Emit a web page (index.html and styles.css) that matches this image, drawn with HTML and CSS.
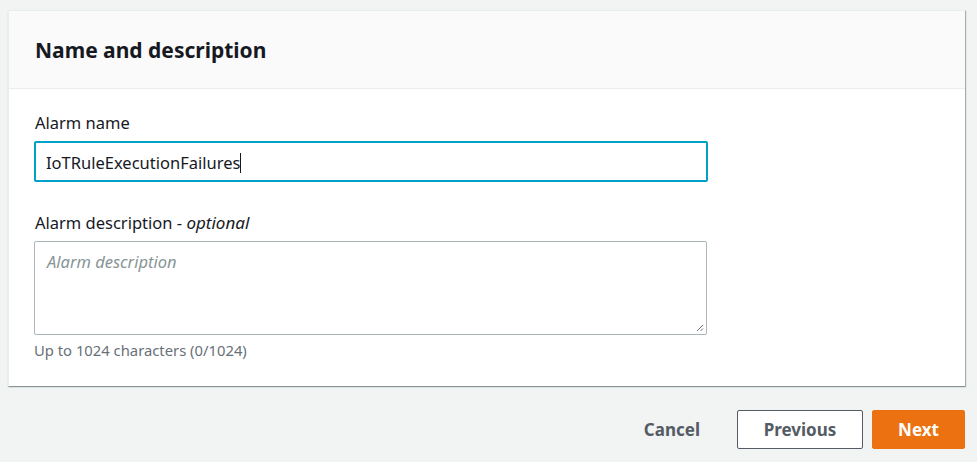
FILE: index.html
```html
<!doctype html>
<html lang="en">
  <head>
    <meta charset="UTF-8" />
    <title>Name and description</title>
    <link rel="stylesheet" href="styles.css">
  </head>
  <body>
    <div class="panel">
      <div class="panel-header">
        <h2>Name and description</h2>
      </div>
      <div class="panel-body">
        <div class="field">
          <label class="field-label" for="alarmName">Alarm name</label>
          <div class="input focused">
            <span class="value">IoTRuleExecutionFailures</span><span class="caret"></span>
          </div>
        </div>
        <div class="field">
          <label class="field-label" for="alarmDesc">Alarm description - <i>optional</i></label>
          <div class="textarea">
            <span class="placeholder">Alarm description</span>
            <svg class="grip" width="8" height="8" viewBox="0 0 8 8">
              <path d="M7 1 L1 7 M7 4.5 L4.5 7" stroke="#6b7172" stroke-width="1" fill="none" />
            </svg>
          </div>
          <p class="hint">Up to 1024 characters (0/1024)</p>
        </div>
      </div>
    </div>

    <div class="actions">
      <button class="btn btn-link">Cancel</button>
      <button class="btn btn-normal">Previous</button>
      <button class="btn btn-primary">Next</button>
    </div>
  </body>
</html>
```

FILE: styles.css
```css
:root {
  --page: #f2f3f3;
  --text: #16191f;
  --muted: #687078;
  --border: #aab7b8;
  --focus: #00a1c9;
  --orange: #ec7211;
}
body {
  margin: 0;
  padding: 10px 12px 0 8px;
  background-color: var(--page);
  font-family: "Noto Sans", "Open Sans", sans-serif;
  color: var(--text);
}

.panel {
  background: white;
  border-left: 1px solid #eaeded;
  border-top: 1px solid #eaeded;
  box-shadow: 1px 1px 1px 0 rgba(0, 28, 36, 0.3), 0 1px 1px 0 rgba(0, 28, 36, 0.2);
}
.panel-header {
  background: #fafafa;
  border-bottom: 1px solid #eaeded;
  height: 77px;
  display: flex;
  align-items: center;
  padding-left: 26px;
}
.panel-header h2 {
  margin: 0;
  font-size: 21px;
  font-weight: 700;
  line-height: 28px;
}
.panel-body {
  padding: 23px 26px 27px 25px;
}

.field + .field {
  margin-top: 30px;
}
.field-label {
  display: block;
  font-size: 16.5px;
  line-height: 22px;
  margin-bottom: 7px;
  padding-left: 1px;
}
.field-label i {
  font-size: 17px;
}
.input {
  width: 674px;
  height: 41px;
  box-sizing: border-box;
  border: 1px solid var(--border);
  border-radius: 2px;
  display: flex;
  align-items: center;
  padding: 2px 0 0 10px;
  font-size: 16.5px;
}
.input.focused {
  border: 2px solid var(--focus);
}
.caret {
  display: inline-block;
  width: 1px;
  height: 20px;
  background: var(--text);
}
.textarea {
  position: relative;
  width: 673px;
  height: 94px;
  box-sizing: border-box;
  border: 1px solid var(--border);
  border-radius: 2px;
  padding: 8px 12px;
  font-size: 16.5px;
}
.placeholder {
  color: #879596;
  font-style: italic;
}
.grip {
  position: absolute;
  right: 2px;
  bottom: 2px;
}
.hint {
  margin: 6px 0 0;
  font-size: 14.8px;
  line-height: 18px;
  color: var(--muted);
}

.actions {
  display: flex;
  justify-content: flex-end;
  align-items: center;
  gap: 9px;
  margin-top: 24px;
}
.btn {
  font-family: inherit;
  font-size: 17px;
  font-weight: 700;
  height: 39px;
  border-radius: 2px;
  cursor: pointer;
}
.btn-link {
  background: none;
  border: none;
  color: #545b64;
  padding: 0 28px 0 0;
}
.btn-normal {
  width: 126px;
  background: white;
  border: 1px solid #545b64;
  color: #545b64;
}
.btn-primary {
  width: 93px;
  background: var(--orange);
  border: 1px solid var(--orange);
  color: white;
}
```
